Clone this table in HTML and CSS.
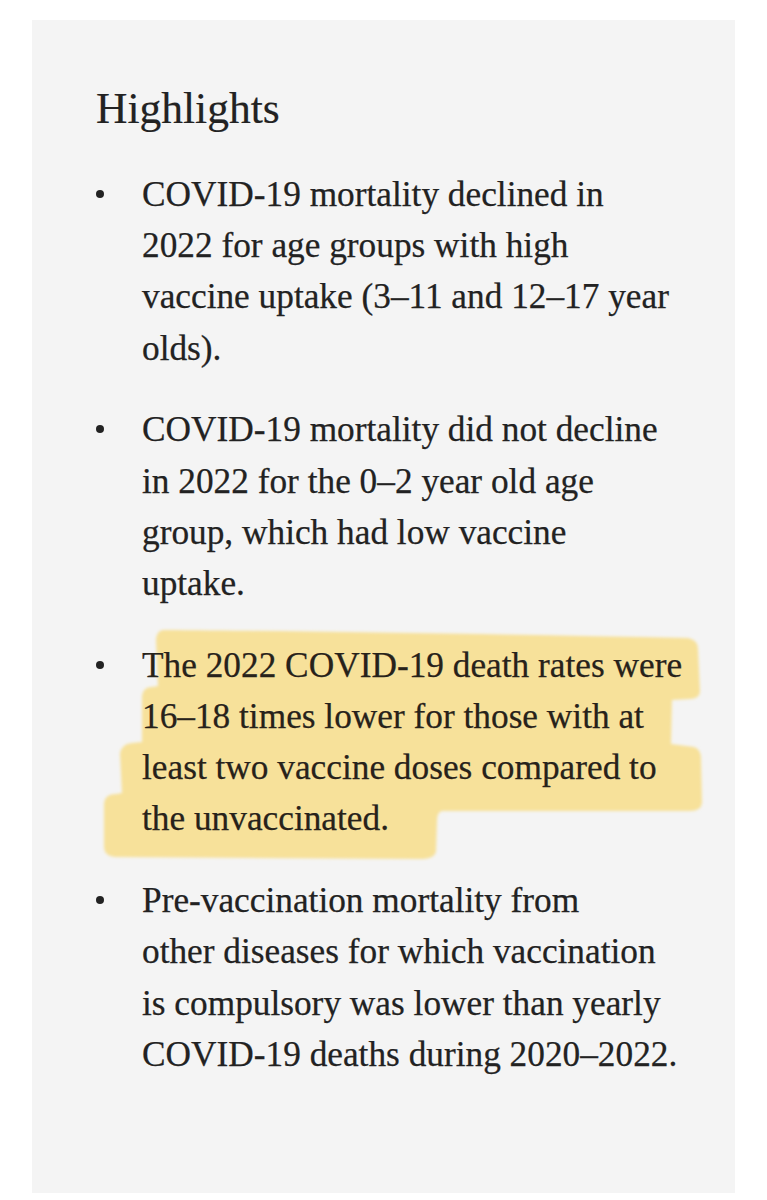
FILE: index.html
```html
<!DOCTYPE html>
<html lang="en">
<head>
<meta charset="utf-8">
<title>Highlights</title>
<link rel="stylesheet" href="styles.css">
</head>
<body>
<section class="card">
  <h2 class="title">Highlights</h2>
  <ul class="list">
    <li class="item">
      <span class="dot"></span>
      <p class="text">COVID-19 mortality declined in<br>2022 for age groups with high<br>vaccine uptake (3–11 and 12–17 year<br>olds).</p>
    </li>
    <li class="item">
      <span class="dot"></span>
      <p class="text">COVID-19 mortality did not decline<br>in 2022 for the 0–2 year old age<br>group, which had low vaccine<br>uptake.</p>
    </li>
    <li class="item marked">
      <span class="dot"></span>
      <svg class="marker" width="640" height="260" viewBox="76 620 640 260" aria-hidden="true">
        <defs>
          <filter id="soft" x="-5%" y="-5%" width="110%" height="110%">
            <feGaussianBlur stdDeviation="1.6"/>
          </filter>
        </defs>
        <path filter="url(#soft)" fill="#f7e19a" d="M163 631 C300 632 500 635 688 639 Q698 641 698 650 L700 693 Q699 700 690 700 L672 701 L671 745 L694 748 Q701 750 701 760 L702 804 Q701 812 690 812 L442 812 Q437 813 437 822 L436 852 Q435 860 420 860 L115 858 Q104 857 104 848 L104 804 Q105 795 116 795 L122 794 L120 755 Q121 745 132 744 L142 743 L142 697 Q143 688 152 688 L158 687 L156 642 Q156 632 163 631 Z"/>
      </svg>
      <p class="text">The 2022 COVID-19 death rates were<br>16–18 times lower for those with at<br>least two vaccine doses compared to<br>the unvaccinated.</p>
    </li>
    <li class="item">
      <span class="dot"></span>
      <p class="text">Pre-vaccination mortality from<br>other diseases for which vaccination<br>is compulsory was lower than yearly<br>COVID-19 deaths during 2020–2022.</p>
    </li>
  </ul>
</section>
</body>
</html>
```

FILE: styles.css
```css
* {
  box-sizing: border-box;
}

html,
body {
  margin: 0;
  padding: 0;
  background: #ffffff;
}

body {
  padding: 20px 0 0 32px;
  font-family: "Liberation Serif", "Times New Roman", serif;
  color: #222222;
}

.card {
  width: 703px;
  height: 1173px;
  background: #f4f4f4;
  padding: 63px 0 0 64px;
}

.title {
  margin: 0;
  font-size: 43.5px;
  line-height: 50px;
  font-weight: 400;
  color: #222222;
  -webkit-text-stroke: 0.2px #222222;
}

.list {
  list-style: none;
  margin: 36px 0 0 0;
  padding: 0;
  display: flex;
  flex-direction: column;
  gap: 30.6px;
}

.item {
  position: relative;
  display: grid;
  grid-template-columns: 46px 1fr;
  align-items: start;
}

.dot {
  width: 8px;
  height: 8px;
  border-radius: 50%;
  background: #222222;
  margin-top: 20.7px;
}

.text {
  position: relative;
  margin: 0;
  font-size: 35.3px;
  line-height: 51.2px;
  white-space: nowrap;
  -webkit-text-stroke: 0.25px #222222;
}

.marked .text {
  color: #27221a;
  -webkit-text-stroke: 0.25px #27221a;
}

.marker {
  position: absolute;
  left: -20px;
  top: -20.6px;
  pointer-events: none;
  overflow: visible;
}
```
